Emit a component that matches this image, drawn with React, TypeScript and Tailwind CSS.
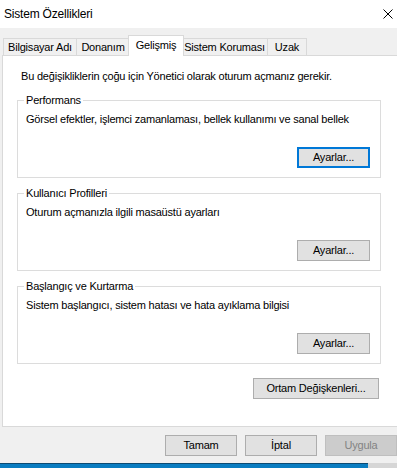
import React from "react";

const font = "font-['Liberation_Sans',Arial,sans-serif] tracking-[-0.2px]";

type Tab = { label: string; w: string; active?: boolean };

const tabs: Tab[] = [
  { label: "Bilgisayar Adı", w: "w-[74px]" },
  { label: "Donanım", w: "w-[54px]" },
  { label: "Gelişmiş", w: "w-[56px]", active: true },
  { label: "Sistem Koruması", w: "w-[87px]" },
  { label: "Uzak", w: "w-[40px]" },
];

const Button: React.FC<{
  label: string;
  w?: string;
  focused?: boolean;
  disabled?: boolean;
}> = ({ label, w = "w-[73px]", focused, disabled }) => (
  <div
    className={
      "h-[21px] flex items-center justify-center text-[11px] whitespace-nowrap " +
      w +
      " " +
      (focused
        ? "border-2 border-[#0078d7] bg-[#e1e1e1] text-black"
        : disabled
        ? "border border-[#bfbfbf] bg-[#cccccc] text-[#838383]"
        : "border border-[#adadad] bg-[#e1e1e1] text-black")
    }
  >
    {label}
  </div>
);

const GroupBox: React.FC<{ title: string; text: string; focused?: boolean }> = ({
  title,
  text,
  focused,
}) => (
  <fieldset className="w-[364px] border border-[#dcdcdc] pl-[8px] pr-[10px] pb-[9px] min-w-0">
    <legend className="-ml-[2px] px-[2px] text-[11px] leading-[16px] text-black">
      {title}
    </legend>
    <p className="mt-[3px] text-[11px] leading-[16px] text-black whitespace-nowrap">
      {text}
    </p>
    <div className="mt-[20px] flex justify-end">
      <Button label="Ayarlar..." focused={focused} />
    </div>
  </fieldset>
);

const App: React.FC = () => {
  return (
    <div className={"w-[397px] h-[468px] relative overflow-hidden bg-[#f0f0f0] flex flex-col " + font}>
      {/* title bar */}
      <div className="h-[28px] bg-white flex items-center justify-between pl-[4px] pr-[4px]">
        <p className="text-[12px] text-black">Sistem Özellikleri</p>
        <svg width={10} height={10} viewBox="0 0 10 10">
          <path d="M0.5 0.5L9.5 9.5M9.5 0.5L0.5 9.5" stroke="black" strokeWidth="1" />
        </svg>
      </div>

      {/* tabs */}
      <div className="mt-[7px] h-[20px] pl-[3px] flex items-end">
        {tabs.map((t, i) =>
          t.active ? (
            <div
              key={i}
              className={
                "h-[21px] -mb-px -mx-[2px] relative z-10 bg-white border border-b-0 border-[#d9d9d9] flex items-center justify-center text-[11px] text-black pb-[2px] whitespace-nowrap " +
                t.w
              }
            >
              {t.label}
            </div>
          ) : (
            <div
              key={i}
              className={
                "h-[17px] border border-b-0 border-[#d9d9d9] -ml-px first:ml-0 flex items-center justify-center text-[11px] text-black bg-[#f0f0f0] whitespace-nowrap " +
                t.w
              }
            >
              {t.label}
            </div>
          )
        )}
      </div>

      {/* panel */}
      <div className="ml-[2px] w-[420px] h-[372px] bg-white border border-[#d9d9d9] pt-[12px]">
        <p className="pl-[18px] text-[11px] leading-[16px] text-black">
          Bu değişikliklerin çoğu için Yönetici olarak oturum açmanız gerekir.
        </p>
        <div className="mt-[8px] pl-[14px] flex flex-col gap-[7px]">
          <GroupBox
            title="Performans"
            text="Görsel efektler, işlemci zamanlaması, bellek kullanımı ve sanal bellek"
            focused
          />
          <GroupBox title="Kullanıcı Profilleri" text="Oturum açmanızla ilgili masaüstü ayarları" />
          <GroupBox
            title="Başlangıç ve Kurtarma"
            text="Sistem başlangıcı, sistem hatası ve hata ayıklama bilgisi"
          />
        </div>
        <div className="mt-[14px] w-[376px] flex justify-end">
          <Button label="Ortam Değişkenleri..." w="w-[126px]" />
        </div>
      </div>

      {/* dialog buttons */}
      <div className="mt-[8px] pl-[165px] flex gap-[8px]">
        <Button label="Tamam" />
        <Button label="İptal" />
        <Button label="Uygula" disabled />
      </div>

      {/* taskbar peeking below */}
      <div className="absolute left-0 bottom-0 w-full h-[5px] flex">
        <div className="w-[368px] h-full bg-[#0a7cc0] border-t border-[#0c4a72]" />
        <div className="flex-1 h-full bg-[#d6d6d6]" />
      </div>
    </div>
  );
};

export default App;
